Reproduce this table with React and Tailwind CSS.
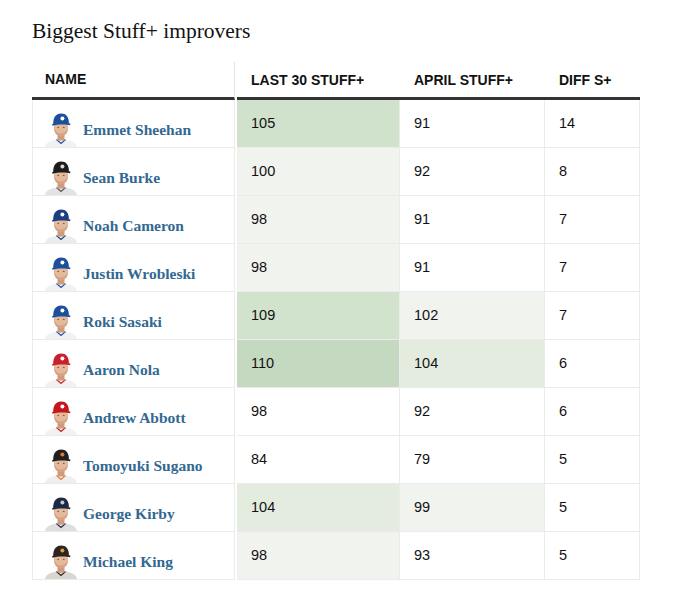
const rows = [
  { name: 'Emmet Sheehan', cap: '#1d4f9c', logo: '#ffffff', jersey: '#f1f1f1', trim: '#1d4f9c', l30: 105, apr: 91, diff: 14, s1: 'bg-[#d0e2cc]', s2: '' },
  { name: 'Sean Burke', cap: '#1c1c1c', logo: '#d9d9d9', jersey: '#e3e3e3', trim: '#555555', l30: 100, apr: 92, diff: 8, s1: 'bg-[#f0f3ee]', s2: '' },
  { name: 'Noah Cameron', cap: '#1b3f82', logo: '#ffffff', jersey: '#ececec', trim: '#1b3f82', l30: 98, apr: 91, diff: 7, s1: 'bg-[#f0f3ee]', s2: '' },
  { name: 'Justin Wrobleski', cap: '#1d4f9c', logo: '#ffffff', jersey: '#f1f1f1', trim: '#1d4f9c', l30: 98, apr: 91, diff: 7, s1: 'bg-[#f0f3ee]', s2: '' },
  { name: 'Roki Sasaki', cap: '#1d4f9c', logo: '#ffffff', jersey: '#f1f1f1', trim: '#1d4f9c', l30: 109, apr: 102, diff: 7, s1: 'bg-[#d1e3cd]', s2: 'bg-[#f0f3ee]' },
  { name: 'Aaron Nola', cap: '#c8202f', logo: '#ffffff', jersey: '#f3f0f0', trim: '#c8202f', l30: 110, apr: 104, diff: 6, s1: 'bg-[#c4d9bf]', s2: 'bg-[#e3ecdf]' },
  { name: 'Andrew Abbott', cap: '#c4161c', logo: '#ffffff', jersey: '#f2f2f2', trim: '#c4161c', l30: 98, apr: 92, diff: 6, s1: '', s2: '' },
  { name: 'Tomoyuki Sugano', cap: '#202020', logo: '#e8772e', jersey: '#efefef', trim: '#e8772e', l30: 84, apr: 79, diff: 5, s1: '', s2: '' },
  { name: 'George Kirby', cap: '#1a2a44', logo: '#c9c9c9', jersey: '#dedede', trim: '#1a2a44', l30: 104, apr: 99, diff: 5, s1: 'bg-[#e3ecdf]', s2: 'bg-[#f0f3ee]' },
  { name: 'Michael King', cap: '#2f241d', logo: '#c9a34b', jersey: '#d9d6d2', trim: '#2f241d', l30: 98, apr: 93, diff: 5, s1: 'bg-[#f0f3ee]', s2: '' },
];

function Headshot({ cap, logo, jersey, trim }) {
  return (
    <svg width="34" height="37" viewBox="0 0 34 37" className="shrink-0">
      <path d="M1 37 C2 32 7 30.5 12 29.5 L22 29.5 C27 30.5 32 32 33 37 Z" fill={jersey} />
      <path d="M12.5 29.5 L17 33.5 L21.5 29.5" fill="none" stroke={trim} strokeWidth="1.1" />
      <rect x="13.5" y="23" width="7" height="7.5" fill="#cf9b7d" />
      <ellipse cx="17" cy="17.5" rx="7.2" ry="8.6" fill="#e6b99b" />
      <path d="M10 18.5 C10.5 23.5 13.3 26.2 17 26.2 C20.7 26.2 23.5 23.5 24 18.5 C22.3 22 19.8 23.4 17 23.4 C14.2 23.4 11.7 22 10 18.5 Z" fill="#d3a285" />
      <ellipse cx="14.2" cy="17.3" rx="0.9" ry="0.6" fill="#6b4a3a" />
      <ellipse cx="19.8" cy="17.3" rx="0.9" ry="0.6" fill="#6b4a3a" />
      <path d="M9.2 14 C9 6.5 12.6 3.4 17.2 3.4 C21.8 3.4 25 6.5 24.9 13.4 Z" fill={cap} />
      <path d="M8 14.2 C12 12.4 22 12.2 26.5 13.6 L26 15.2 C21.5 14 12.5 14.3 8.6 15.8 Z" fill={cap} />
      <circle cx="18.4" cy="8.6" r="2" fill={logo} />
    </svg>
  );
}

export default function App() {
  const cell = 'border-r border-[#ebebeb] px-[14px] pt-[13px] text-[14.5px] leading-5 text-[#121212]';
  return (
    <div className="w-[680px] h-[594px] bg-white pl-8 pt-[17px]" style={{ fontFamily: '"Liberation Sans", Arial, sans-serif' }}>
      <h2 className="text-[21.5px] leading-7 text-[#121212]" style={{ fontFamily: '"Liberation Serif", "Times New Roman", serif' }}>
        Biggest Stuff+ improvers
      </h2>
      <div className="mt-[17px] w-[608px]">
        <div className="flex h-[38px] text-[14px] font-bold text-[#121212]">
          <div className="w-[203px] border-r border-[#e2e2e2] border-b-[3px] border-b-[#333] pl-[13px] pt-[7px]">NAME</div>
          <div className="ml-[2px] flex flex-1 border-b-[3px] border-[#333] pt-[8px]">
            <div className="w-[163px] pl-[14px]">LAST 30 STUFF+</div>
            <div className="w-[145px] pl-[14px]">APRIL STUFF+</div>
            <div className="flex-1 pl-[14px]">DIFF S+</div>
          </div>
        </div>
        {rows.map((r) => (
          <div key={r.name} className="flex h-[48px]">
            <div className="flex w-[203px] items-end border-l border-b border-r border-[#ebebeb] pl-[11px]">
              <Headshot cap={r.cap} logo={r.logo} jersey={r.jersey} trim={r.trim} />
              <span className="ml-[5px] pb-[7px] text-[15.5px] font-bold leading-5 text-[#326891]" style={{ fontFamily: '"Liberation Serif", Georgia, serif' }}>
                {r.name}
              </span>
            </div>
            <div className="ml-[2px] flex flex-1 border-b border-[#ebebeb]">
              <div className={`w-[163px] ${cell} ${r.s1}`}>{r.l30}</div>
              <div className={`w-[145px] ${cell} ${r.s2}`}>{r.apr}</div>
              <div className={`flex-1 ${cell}`}>{r.diff}</div>
            </div>
          </div>
        ))}
      </div>
    </div>
  );
}
